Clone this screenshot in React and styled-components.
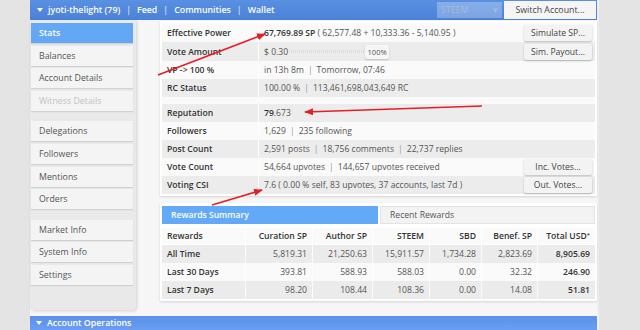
import React from "react";
import styled, { createGlobalStyle } from "styled-components";

const GlobalStyle = createGlobalStyle`
  body {
    margin: 0;
    background: #e4e4e4;
    font-family: "Open Sans", "Liberation Sans", sans-serif;
    font-size: 8.6px;
    color: #555;
  }
`;

const Screen = styled.div`
  position: relative;
  width: 640px;
  height: 330px;
  overflow: hidden;
`;

const Page = styled.div`
  margin-left: 30px;
  width: 567px;
  height: 330px;
  background: #f6f6f6;
  display: flex;
  flex-direction: column;
  box-shadow: 2px 0 0 #efefef;
`;

const TopBar = styled.div`
  height: 20px;
  flex-shrink: 0;
  display: flex;
  align-items: center;
  padding-left: 7px;
  background: linear-gradient(#5990e2, #4b81d8);
  color: #fff;
  font-weight: 600;
  font-size: 8.8px;
`;

const Caret = styled.span`
  width: 0;
  height: 0;
  border-left: 3.5px solid transparent;
  border-right: 3.5px solid transparent;
  border-top: 4px solid #fff;
  margin-right: 5px;
`;

const Nav = styled.div`
  display: flex;
  gap: 6px;
`;

const NavSep = styled.span`
  font-weight: 400;
  opacity: 0.9;
`;

const BarRight = styled.div`
  margin-left: auto;
  display: flex;
  align-items: center;
  gap: 2px;
  margin-right: 1px;
`;

const ChainSelect = styled.div`
  width: 65px;
  height: 16px;
  box-sizing: border-box;
  display: flex;
  align-items: center;
  justify-content: space-between;
  padding: 0 4px 0 4px;
  background: rgba(255, 255, 255, 0.28);
  color: #a6bbe0;
  font-weight: 400;
`;

const SwitchButton = styled.div`
  width: 92px;
  height: 18px;
  display: flex;
  align-items: center;
  justify-content: center;
  background: #f5f5f5;
  color: #444;
  font-weight: 400;
`;

const Body = styled.div`
  display: flex;
  height: 296px;
  flex-shrink: 0;
`;

const Sidebar = styled.div`
  width: 106px;
  height: 290px;
  box-sizing: border-box;
  padding: 3px 3px 0 1px;
  background: #e9e9e9;
  border-radius: 0 0 4px 4px;
  box-shadow: 1px 1px 3px rgba(0, 0, 0, 0.15);
`;

const SideGroup = styled.div`
  display: flex;
  flex-direction: column;
  gap: 2.6px;
  margin-bottom: 10.6px;
`;

const SideItem = styled.div`
  height: 20px;
  display: flex;
  align-items: center;
  padding-left: 8px;
  font-size: 8.8px;
  background: ${(p) => (p.$active ? "#62a8f5" : "#f4f4f4")};
  color: ${(p) => (p.$active ? "#fff" : p.$disabled ? "#c2c2c2" : "#555")};
  font-weight: ${(p) => (p.$active ? 600 : 400)};
  box-shadow: 0 1px 1px rgba(0, 0, 0, 0.1);
`;

const Main = styled.div`
  flex: 1;
  padding: 1px 0 0 24px;
  display: flex;
  flex-direction: column;
  gap: 7px;
`;

const Panel = styled.div`
  background: #fff;
  padding: ${(p) => p.$pad || "2px"};
  box-shadow: 0 1px 2px rgba(0, 0, 0, 0.14);
`;

const StatRow = styled.div`
  display: grid;
  grid-template-columns: 97px 1fr;
  height: ${(p) => p.$h || 18}px;
  background: ${(p) => (p.$alt ? "#ececec" : "#fafafa")};
`;

const StatLabel = styled.div`
  display: flex;
  align-items: center;
  padding-left: 5px;
  font-weight: 600;
  color: #333;
  border-right: 1px solid #fff;
`;

const StatValue = styled.div`
  display: flex;
  align-items: center;
  padding-left: 5px;
  white-space: nowrap;
`;

const Strong = styled.b`
  font-weight: 600;
  color: #333;
`;

const Sep = styled.span`
  margin: 0 4px;
  color: #999;
`;

const SmallButton = styled.div`
  margin-left: auto;
  margin-right: 3px;
  width: 68px;
  height: 16px;
  display: flex;
  align-items: center;
  justify-content: center;
  background: #f3f3f3;
  color: #444;
  border-radius: 2px;
  box-shadow: 0 1px 2px rgba(0, 0, 0, 0.25);
`;

const Track = styled.div`
  width: 74px;
  height: 3px;
  margin-left: 3px;
  background: repeating-linear-gradient(90deg, #dcdcdc 0 1px, transparent 1px 2px);
`;

const Thumb = styled.div`
  width: 24px;
  height: 14px;
  display: flex;
  align-items: center;
  justify-content: center;
  font-size: 7.6px;
  background: #f6f6f6;
  box-shadow: 0 1px 2px rgba(0, 0, 0, 0.2);
  border-radius: 2px;
`;

const Tabs = styled.div`
  display: grid;
  grid-template-columns: 216px 215px;
  gap: 2px;
  margin-bottom: 4px;
`;

const Tab = styled.div`
  height: 18px;
  box-sizing: border-box;
  display: flex;
  align-items: center;
  padding-left: 9px;
  background: ${(p) => (p.$active ? "#62a9f7" : "#f3f3f3")};
  color: ${(p) => (p.$active ? "#fff" : "#555")};
  font-weight: ${(p) => (p.$active ? 600 : 400)};
  border: ${(p) => (p.$active ? "none" : "1px solid #e3e3e3")};
`;

const RewardRow = styled.div`
  display: grid;
  grid-template-columns: 83px 67px 60px 57px 52px 56px 58px;
  height: ${(p) => (p.$head ? 16 : 18)}px;
  margin-bottom: ${(p) => (p.$head ? 1 : 0)}px;
  background: ${(p) => (p.$alt ? "#ebebeb" : "#fafafa")};
`;

const Cell = styled.div`
  display: flex;
  align-items: center;
  justify-content: ${(p) => (p.$left ? "flex-start" : "flex-end")};
  padding: 0 5px;
  border-left: ${(p) => (p.$left ? "none" : "1px solid rgba(255,255,255,0.85)")};
  font-weight: ${(p) => (p.$bold ? 600 : 400)};
  color: ${(p) => (p.$bold ? "#333" : "#555")};
  white-space: nowrap;
`;

const Star = styled.sup`
  font-size: 6px;
  align-self: flex-start;
  margin-top: 3px;
`;

const OpsBar = styled.div`
  height: 14px;
  flex-shrink: 0;
  display: flex;
  align-items: center;
  padding-left: 6px;
  background: linear-gradient(#5b90ec, #6a9df2);
  color: #fff;
  font-weight: 600;
  font-size: 8.8px;
`;

const Overlay = styled.svg`
  position: absolute;
  top: 0;
  left: 0;
  pointer-events: none;
`;

const stats = [
  { label: "Effective Power", h: 19, button: "Simulate SP..." },
  { label: "Vote Amount", h: 19, alt: true, button: "Sim. Payout..." },
  { label: "VP -> 100 %" },
  { label: "RC Status", alt: true },
];

const social = [
  { label: "Reputation", alt: true },
  { label: "Followers" },
  { label: "Post Count", alt: true },
  { label: "Vote Count", button: "Inc. Votes..." },
  { label: "Voting CSI", alt: true, button: "Out. Votes..." },
];

const Piped = ({ parts }) =>
  parts.map((p, i) => (
    <React.Fragment key={i}>
      {i > 0 && <Sep>|</Sep>}
      {p}
    </React.Fragment>
  ));

const values = {
  "Effective Power": (
    <>
      <Strong>67,769.89 SP</Strong>&nbsp;( 62,577.48 + 10,333.36 - 5,140.95 )
    </>
  ),
  "Vote Amount": (
    <>
      $ 0.30
      <Track />
      <Thumb>100%</Thumb>
    </>
  ),
  "VP -> 100 %": <Piped parts={["in 13h 8m", "Tomorrow, 07:46"]} />,
  "RC Status": <Piped parts={["100.00 %", "113,461,698,043,649 RC"]} />,
  Reputation: (
    <>
      <Strong>79</Strong>.673
    </>
  ),
  Followers: <Piped parts={["1,629", "235 following"]} />,
  "Post Count": <Piped parts={["2,591 posts", "18,756 comments", "22,737 replies"]} />,
  "Vote Count": <Piped parts={["54,664 upvotes", "144,657 upvotes received"]} />,
  "Voting CSI": "7.6 ( 0.00 % self, 83 upvotes, 37 accounts, last 7d )",
};

const rewards = [
  ["All Time", "5,819.31", "21,250.63", "15,911.57", "1,734.28", "2,823.69", "8,905.69"],
  ["Last 30 Days", "393.81", "588.93", "588.03", "0.00", "32.32", "246.90"],
  ["Last 7 Days", "98.20", "108.44", "108.36", "0.00", "14.08", "51.81"],
];

const StatLine = ({ row }) => (
  <StatRow $h={row.h} $alt={row.alt}>
    <StatLabel>{row.label}</StatLabel>
    <StatValue>
      {values[row.label]}
      {row.button && <SmallButton>{row.button}</SmallButton>}
    </StatValue>
  </StatRow>
);

const Arrows = () => (
  <Overlay width="640" height="330" viewBox="0 0 640 330">
    <defs>
      <marker id="head" markerWidth="9" markerHeight="7" refX="8" refY="3.5" orient="auto" markerUnits="userSpaceOnUse">
        <path d="M0,0 L9,3.5 L0,7 z" fill="#e61e26" />
      </marker>
    </defs>
    <line x1="158" y1="75" x2="265" y2="34" stroke="#e61e26" strokeWidth="1.6" markerEnd="url(#head)" />
    <line x1="482" y1="106" x2="305" y2="112" stroke="#e61e26" strokeWidth="1.6" markerEnd="url(#head)" />
    <line x1="212" y1="205" x2="262" y2="190" stroke="#e61e26" strokeWidth="1.6" markerEnd="url(#head)" />
  </Overlay>
);

export default function App() {
  return (
    <Screen>
      <GlobalStyle />
      <Page>
        <TopBar>
          <Caret />
          <Nav>
            <span>jyoti-thelight (79)</span>
            <NavSep>|</NavSep>
            <span>Feed</span>
            <NavSep>|</NavSep>
            <span>Communities</span>
            <NavSep>|</NavSep>
            <span>Wallet</span>
          </Nav>
          <BarRight>
            <ChainSelect>
              <span>STEEM</span>
              <span>▾</span>
            </ChainSelect>
            <SwitchButton>Switch Account...</SwitchButton>
          </BarRight>
        </TopBar>
        <Body>
          <Sidebar>
            <SideGroup>
              <SideItem $active>Stats</SideItem>
              <SideItem>Balances</SideItem>
              <SideItem>Account Details</SideItem>
              <SideItem $disabled>Witness Details</SideItem>
            </SideGroup>
            <SideGroup>
              <SideItem>Delegations</SideItem>
              <SideItem>Followers</SideItem>
              <SideItem>Mentions</SideItem>
              <SideItem>Orders</SideItem>
            </SideGroup>
            <SideGroup>
              <SideItem>Market Info</SideItem>
              <SideItem>System Info</SideItem>
              <SideItem>Settings</SideItem>
            </SideGroup>
          </Sidebar>
          <Main>
            <Panel>
              {stats.map((r) => (
                <StatLine key={r.label} row={r} />
              ))}
              <StatRow $h={7} />
              {social.map((r) => (
                <StatLine key={r.label} row={r} />
              ))}
            </Panel>
            <Panel $pad="3px 2px 2px">
              <Tabs>
                <Tab $active>Rewards Summary</Tab>
                <Tab>Recent Rewards</Tab>
              </Tabs>
              <RewardRow $head>
                <Cell $left $bold>Rewards</Cell>
                <Cell $bold>Curation SP</Cell>
                <Cell $bold>Author SP</Cell>
                <Cell $bold>STEEM</Cell>
                <Cell $bold>SBD</Cell>
                <Cell $bold>Benef. SP</Cell>
                <Cell $bold>
                  Total USD<Star>*</Star>
                </Cell>
              </RewardRow>
              {rewards.map((r, i) => (
                <RewardRow key={r[0]} $alt={i !== 1}>
                  {r.map((v, j) => (
                    <Cell key={j} $left={j === 0} $bold={j === 0 || j === 6}>
                      {v}
                    </Cell>
                  ))}
                </RewardRow>
              ))}
            </Panel>
          </Main>
        </Body>
        <OpsBar>
          <Caret />
          Account Operations
        </OpsBar>
      </Page>
      <Arrows />
    </Screen>
  );
}
